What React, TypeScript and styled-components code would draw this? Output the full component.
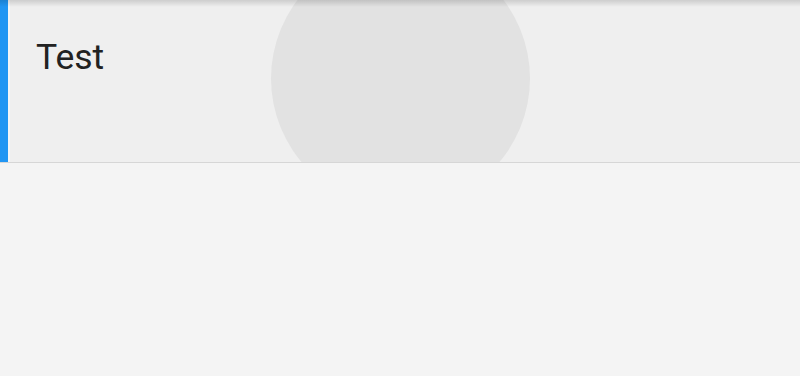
import styled, { createGlobalStyle } from 'styled-components';

const GlobalStyle = createGlobalStyle`
  html, body {
    margin: 0;
    padding: 0;
    background: #f4f4f4;
    font-family: Roboto, "Noto Sans", sans-serif;
  }
`;

const Page = styled.div`
  width: 800px;
  height: 376px;
  overflow: hidden;
  background: #f4f4f4;
`;

// 선택된 리스트 아이템
const Item = styled.div`
  position: relative;
  display: flex;
  height: 162px;
  background: #efefef;
  border-bottom: 1px solid #d6d6d6;
  overflow: hidden;
`;

const Accent = styled.div`
  flex: 0 0 8px;
  background: #2196f3;
  border-right: 2px solid #f6f6f6;
`;

const Label = styled.div`
  padding: 33px 0 0 26px;
  color: #222222;
  font-size: 35.5px;
  line-height: 48px;
  z-index: 1;
`;

// 터치 리플
const Ripple = styled.div`
  position: absolute;
  left: 271px;
  top: -51px;
  width: 259px;
  height: 259px;
  border-radius: 50%;
  background: #e2e2e2;
`;

const TopShadow = styled.div`
  position: absolute;
  left: 0;
  right: 0;
  top: 0;
  height: 7px;
  background: linear-gradient(to bottom, rgba(0, 0, 0, 0.14), rgba(0, 0, 0, 0));
  z-index: 2;
`;

const App = () => {
  return (
    <Page>
      <GlobalStyle />
      <Item>
        <Ripple />
        <TopShadow />
        <Accent />
        <Label>Test</Label>
      </Item>
    </Page>
  );
};

export default App;
